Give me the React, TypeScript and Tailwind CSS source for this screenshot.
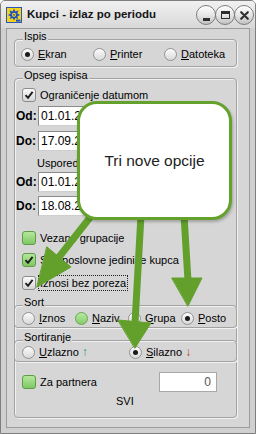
import type { ReactNode } from 'react'

const Mn = ({ c }: { c: string }) => <span className="underline underline-offset-[1px]">{c}</span>

function Group({ label, className, children }: { label: string; className?: string; children: ReactNode }) {
  return (
    <div className={`rounded-[4px] border border-[#a2a2a2] shadow-[inset_1px_1px_0_#f1f1f1,1px_1px_0_#f1f1f1] ${className ?? ''}`}>
      <div className="-mt-[10px] ml-[8px] w-fit bg-[#d6d6d6] px-[1px] leading-[13px]">{label}</div>
      {children}
    </div>
  )
}

function Radio({ checked, green, children, className }: { checked?: boolean; green?: boolean; children: ReactNode; className?: string }) {
  return (
    <div className={`flex items-center ${className ?? ''}`}>
      <span
        className={`w-[13px] h-[13px] shrink-0 rounded-full border flex items-center justify-center ${
          green
            ? 'border-[#6aa452] bg-linear-to-b from-[#b6eaa0] to-[#86cc6c]'
            : 'border-[#929292] bg-linear-to-b from-[#fbfbfb] to-[#d9d9d9]'
        }`}
      >
        {checked && <span className="w-[5px] h-[5px] rounded-full bg-[#1b1b1b]" />}
      </span>
      <span className="ml-[4px] leading-[13px]">{children}</span>
    </div>
  )
}

function Check({ checked, green, children }: { checked?: boolean; green?: boolean; children: ReactNode }) {
  return (
    <div className="flex items-center pl-[7px]">
      <span
        className={`w-[14px] h-[14px] shrink-0 rounded-[3px] border flex items-center justify-center ${
          green
            ? 'border-[#5f9c48] bg-linear-to-b from-[#b4e89c] to-[#7fc865]'
            : 'border-[#8c8c8c] bg-linear-to-b from-[#fafafa] to-[#d6d6d6]'
        }`}
      >
        {checked && (
          <svg width="10" height="10" viewBox="0 0 10 10">
            <path d="M1.5 5.2 L4 7.8 L8.6 1.8" fill="none" stroke="#1c1c1c" strokeWidth="1.9" />
          </svg>
        )}
      </span>
      <span className="ml-[4px] leading-[13px]">{children}</span>
    </div>
  )
}

function DateRow({ label, value, className }: { label: string; value: string; className?: string }) {
  return (
    <div className={`flex items-center h-[20px] ${className ?? ''}`}>
      <span className="w-[23px] pl-[1px] font-bold text-[12px]">{label}</span>
      <div className="w-[80px] h-[20px] bg-white border border-[#8a8a8a] border-r-[#cfcfcf] border-b-[#cfcfcf] pl-[2px] text-[12px] leading-[18px]">
        {value}
      </div>
    </div>
  )
}

function TitleBtn({ children }: { children: ReactNode }) {
  return (
    <div className="w-[20px] h-[20px] -ml-[1px] rounded-full border border-[#7c7c7c] bg-linear-to-b from-[#fdfdfd] via-[#e6e6e6] to-[#c2c2c2] shadow-[inset_0_1px_0_#ffffff] flex items-center justify-center">
      {children}
    </div>
  )
}

export default function App() {
  return (
    <div className="relative w-[256px] h-[434px] overflow-hidden flex flex-col bg-[#d0d0d0] border border-[#7e7e7e] rounded-t-[5px] font-['Liberation_Sans',Arial,sans-serif] text-[11px] text-black">
      {/* title bar */}
      <div className="h-[27px] flex items-center pl-[5px] bg-linear-to-b from-[#f1f1f1] to-[#d8d8d8]">
        <svg width="16" height="16" viewBox="0 0 16 16" className="shrink-0">
          <rect x="0.5" y="0.5" width="15" height="15" fill="#f3d31c" stroke="#2b56b6" />
          <polygon
            points="8,1.6 9.3,4.6 12.5,3.4 11.3,6.6 14,8 11.3,9.4 12.2,12 9.3,11 8,13.6 6.7,11 3.8,12 4.7,9.4 2,8 4.7,6.6 3.5,3.4 6.7,4.6"
            fill="#1f4fc4"
          />
          <circle cx="8" cy="7.8" r="2.1" fill="#f3d31c" />
          <circle cx="8" cy="7.8" r="0.9" fill="#1f4fc4" />
          <rect x="10" y="12.6" width="4.5" height="2" fill="#1f4fc4" />
        </svg>
        <span className="ml-[5px] font-bold text-[11.5px] text-[#151515]">Kupci - izlaz po periodu</span>
        <div className="ml-auto mr-[1px] flex items-center pt-[1px]">
          <TitleBtn>
            <span className="mt-[8px] w-[7px] h-[3px] bg-[#2e2e2e]" />
          </TitleBtn>
          <TitleBtn>
            <span className="w-[9px] h-[8px] border-[#2e2e2e] border-[1.5px] border-t-[3px]" />
          </TitleBtn>
          <TitleBtn>
            <svg width="9" height="9" viewBox="0 0 9 9">
              <path d="M1.2 1.2 L7.8 7.8 M7.8 1.2 L1.2 7.8" stroke="#2e2e2e" strokeWidth="2.1" strokeLinecap="round" />
            </svg>
          </TitleBtn>
        </div>
      </div>

      {/* client area */}
      <div className="flex-1 mx-[5px] mb-[5px] border border-[#9c9c9c] bg-[#d6d6d6]">
        <Group label="Ispis" className="mt-[10px] ml-[7px] w-[223px] pb-[2px]">
          <div className="mt-[1px] h-[20px] flex items-center pl-[6px]">
            <Radio checked className="w-[72px]">
              <Mn c="E" />kran
            </Radio>
            <Radio className="w-[71px]">
              <Mn c="P" />rinter
            </Radio>
            <Radio>
              <Mn c="D" />atoteka
            </Radio>
          </div>
        </Group>

        <Group label="Opseg ispisa" className="mt-[11px] ml-[7px] w-[223px] pb-[9px]">
          <div className="mt-[4px] h-[18px] flex items-center">
            <Check checked>Ograničenje datumom</Check>
          </div>
          <DateRow label="Od:" value="01.01.2013" className="mt-[2px]" />
          <DateRow label="Do:" value="17.09.2013" className="mt-[5px]" />
          <div className="mt-[5px] h-[14px] leading-[14px] pl-[22px]">Usporedno</div>
          <DateRow label="Od:" value="01.01.2012" className="mt-[2px]" />
          <DateRow label="Do:" value="18.08.2012" className="mt-[4px]" />

          <div className="mt-[13px] h-[18px] flex items-center">
            <Check green>Vezane grupacije</Check>
          </div>
          <div className="mt-[4px] h-[18px] flex items-center">
            <Check green checked>Sve poslovne jedinice kupca</Check>
          </div>
          <div className="mt-[5px] h-[18px] flex items-center">
            <Check checked>
              <span className="-ml-[2px] border border-dotted border-[#222] px-[1px] py-[1px]">Iznosi bez poreza</span>
            </Check>
          </div>

          <Group label="Sort" className="mt-[13px] -mx-[1px]">
            <div className="h-[18px] flex items-center pl-[7px]">
              <Radio className="w-[53px]">
                <Mn c="I" />znos
              </Radio>
              <Radio green className="w-[53px]">
                <Mn c="N" />aziv
              </Radio>
              <Radio className="w-[53px]">
                <Mn c="G" />rupa
              </Radio>
              <Radio checked>
                <Mn c="P" />osto
              </Radio>
            </div>
          </Group>

          <Group label="Sortiranje" className="mt-[12px] -mx-[1px]">
            <div className="h-[17px] flex items-center pl-[7px]">
              <Radio className="w-[107px]">
                <Mn c="U" />zlazno <span className="font-bold text-[12px] text-[#3a8c93]">↑</span>
              </Radio>
              <Radio checked>
                <Mn c="S" />ilazno <span className="font-bold text-[12px] text-[#c23b26]">↓</span>
              </Radio>
            </div>
          </Group>

          <div className="mt-[10px] h-[20px] flex items-center">
            <Check green>Za partnera</Check>
            <div className="ml-auto mr-[19px] w-[58px] h-[20px] bg-white border border-[#a8a8a8] text-right pr-[5px] text-[12px] leading-[18px] text-[#555]">
              0
            </div>
          </div>
          <div className="mt-[2px] h-[14px] leading-[14px] ml-[101px]">SVI</div>
        </Group>
      </div>

      {/* annotation arrows */}
      <svg className="absolute left-0 top-0 pointer-events-none" width="256" height="434" viewBox="0 0 256 434">
        <g fill="#62a02b" stroke="#62a02b" strokeLinecap="round" strokeLinejoin="round">
          <line x1="91" y1="214" x2="58" y2="256" strokeWidth="7" />
          <polygon points="46,246 70,266 36,286" strokeWidth="1" />
          <line x1="140" y1="214" x2="134" y2="322" strokeWidth="7" />
          <polygon points="117,319 150,322 134,347" strokeWidth="1" />
          <line x1="183" y1="214" x2="187" y2="280" strokeWidth="7" />
          <polygon points="171,277 201,277 187,305" strokeWidth="1" />
        </g>
      </svg>

      {/* callout */}
      <div className="absolute left-[76px] top-[100px] w-[155px] h-[119px] rounded-[20px] border-[3px] border-[#65a22d] bg-white shadow-[1px_2px_3px_rgba(0,0,0,0.25)] flex items-center justify-center text-[15.5px] text-[#222]">
        Tri nove opcije
      </div>
    </div>
  )
}
